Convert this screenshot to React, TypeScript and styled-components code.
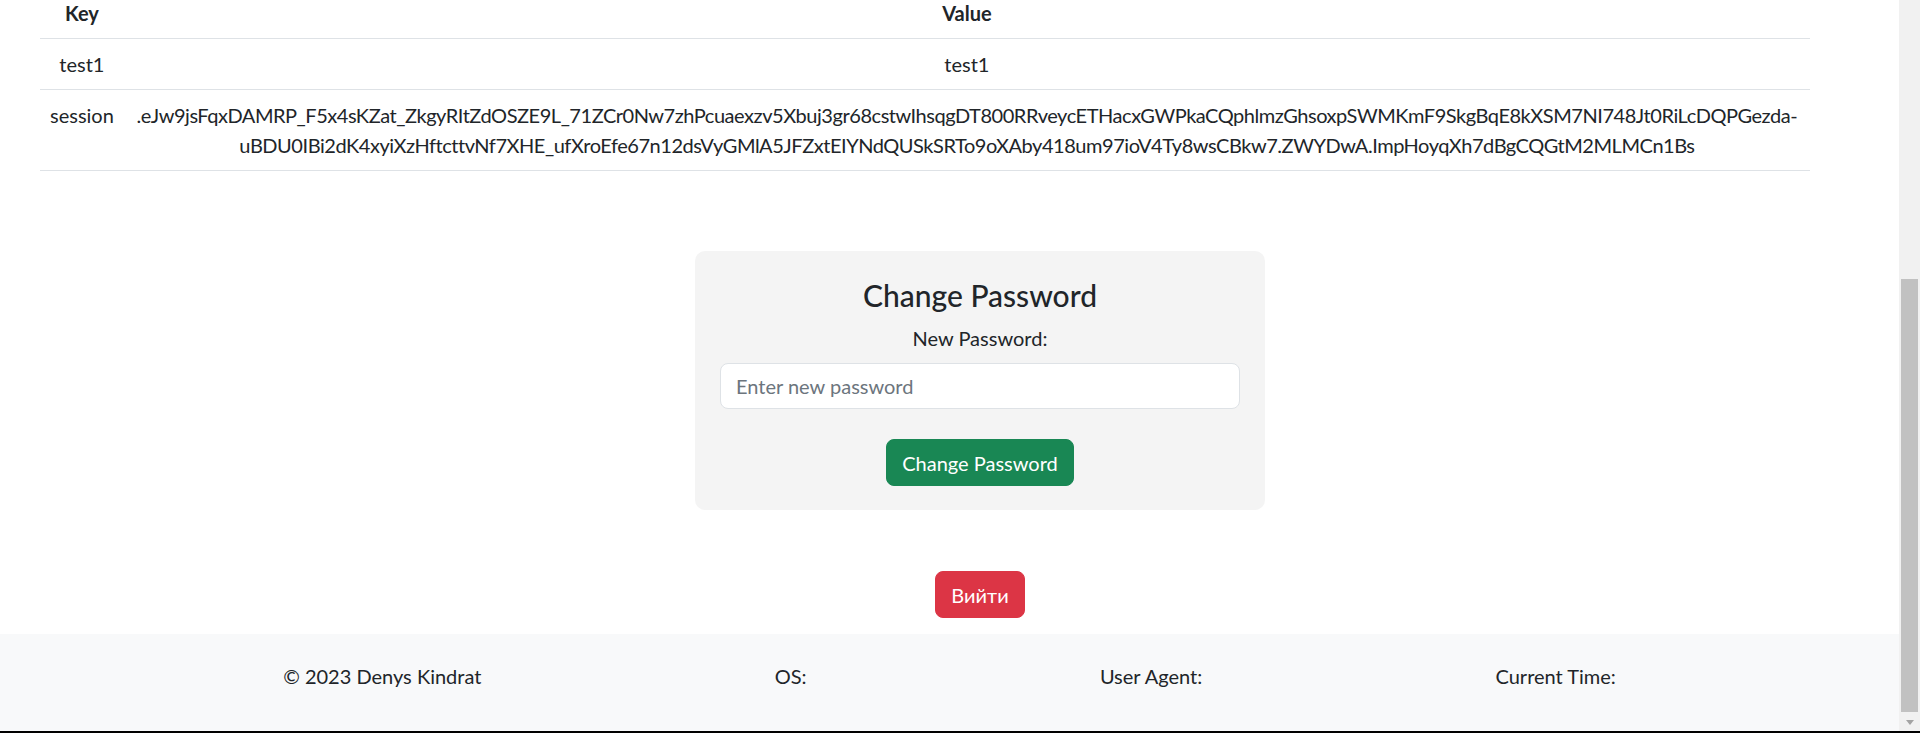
import React from "react";
import styled, { createGlobalStyle } from "styled-components";

const SESSION =
  ".eJw9jsFqxDAMRP_F5x4sKZat_ZkgyRItZdOSZE9L_71ZCr0Nw7zhPcuaexzv5Xbuj3gr68cstwIhsqgDT800RRveycETHacxGWPkaCQphlmzGhsoxpSWMKmF9SkgBqE8kXSM7NI748Jt0RiLcDQPGezda-uBDU0IBi2dK4xyiXzHftcttvNf7XHE_ufXroEfe67n12dsVyGMlA5JFZxtEIYNdQUSkSRTo9oXAby418um97ioV4Ty8wsCBkw7.ZWYDwA.ImpHoyqXh7dBgCQGtM2MLMCn1Bs";

const rows = [
  { key: "test1", value: "test1" },
  { key: "session", value: SESSION },
];

const footerItems = ["© 2023 Denys Kindrat", "OS:", "User Agent:", "Current Time:"];

const GlobalStyle = createGlobalStyle`
  html, body {
    margin: 0;
    padding: 0;
    overflow: hidden;
  }

  body {
    font-family: Lato, "Open Sans", sans-serif;
    font-size: 20px;
    line-height: 30px;
    color: #212529;
    background: #fff;
  }

  * {
    box-sizing: border-box;
  }
`;

export default function App() {
  return (
    <Screen>
      <GlobalStyle />
      <Viewport>
        <Main>
          <DataTable>
            <thead>
              <tr>
                <HeadCell>Key</HeadCell>
                <HeadCell>Value</HeadCell>
              </tr>
            </thead>
            <tbody>
              {rows.map(r => (
                <tr key={r.key}>
                  <Cell>{r.key}</Cell>
                  <Cell long={r.value.length > 40}>{r.value}</Cell>
                </tr>
              ))}
            </tbody>
          </DataTable>

          <CenterColumn>
            <Card>
              <Title>Change Password</Title>
              <Label htmlFor="new-password">New Password:</Label>
              <PasswordInput
                id="new-password"
                type="password"
                placeholder="Enter new password"
              />
              <ActionButton tone="green">Change Password</ActionButton>
            </Card>
            <LogoutRow>
              <ActionButton tone="red">Вийти</ActionButton>
            </LogoutRow>
          </CenterColumn>

          <Footer>
            <FooterInner>
              {footerItems.map(t => (
                <span key={t}>{t}</span>
              ))}
            </FooterInner>
          </Footer>
        </Main>

        <Scrollbar>
          <Thumb />
          <ArrowDown />
        </Scrollbar>
      </Viewport>
      <BottomEdge />
    </Screen>
  );
}

const Screen = styled.div`
  width: 1920px;
  height: 733px;

  display: flex;
  flex-direction: column;
`;

const Viewport = styled.div`
  height: 731px;

  display: flex;
  overflow: hidden;
`;

const Main = styled.div`
  flex: 1;

  display: flex;
  flex-direction: column;
  overflow: hidden;
`;

const DataTable = styled.table`
  width: 1770px;
  margin: -12px 0 0 40px;

  border-collapse: collapse;
  vertical-align: top;
`;

const HeadCell = styled.th`
  padding: 10px;

  font-weight: 700;
  text-align: center;
  border-bottom: 1px solid #dee2e6;
`;

const Cell = styled.td<{ long?: boolean }>`
  padding: 10px;

  text-align: center;
  vertical-align: top;
  letter-spacing: ${p => (p.long ? "-0.46px" : "normal")};
  border-bottom: 1px solid #dee2e6;
`;

const CenterColumn = styled.div`
  padding-left: 61px;
  margin-top: 80px;

  display: flex;
  flex-direction: column;
  align-items: center;
`;

const Card = styled.form`
  width: 570px;
  padding: 26px 25px 24px;

  display: flex;
  flex-direction: column;
  align-items: center;

  background: #f4f4f4;
  border-radius: 10px;
`;

const Title = styled.h3`
  margin: 0 0 10px;

  font-size: 30px;
  line-height: 36px;
  font-weight: 500;
`;

const Label = styled.label`
  display: block;
  margin-bottom: 10px;
`;

const PasswordInput = styled.input`
  width: 100%;
  height: 46px;
  padding: 7px 15px;
  margin-bottom: 30px;

  font: inherit;
  color: #212529;
  background: #fff;
  border: 1px solid #dee2e6;
  border-radius: 8px;
  outline: none;

  &::placeholder {
    color: #6c757d;
  }
`;

const ActionButton = styled.button.attrs({ type: "button" })<{ tone: "green" | "red" }>`
  padding: 7.5px 15px;

  font: inherit;
  color: #fff;
  background: ${p => (p.tone === "green" ? "#198754" : "#dc3545")};
  border: 1px solid ${p => (p.tone === "green" ? "#198754" : "#dc3545")};
  border-radius: 8px;
  cursor: pointer;
`;

const LogoutRow = styled.div`
  margin-top: 61px;
`;

const Footer = styled.footer`
  flex: 1;
  margin-top: 16px;
  padding-top: 27px;

  background: #f8f9fa;
`;

const FooterInner = styled.div`
  width: 1626px;
  margin: 0 auto;

  display: flex;
  justify-content: space-around;
`;

const Scrollbar = styled.div`
  width: 21px;
  flex: none;
  padding-top: 279px;

  display: flex;
  flex-direction: column;
  align-items: center;

  background: #f1f1f1;
`;

const Thumb = styled.div`
  width: 17px;
  height: 433px;

  background: #c1c1c1;
`;

const ArrowDown = styled.div`
  width: 0;
  height: 0;
  margin-top: 8px;

  border-left: 4.5px solid transparent;
  border-right: 4.5px solid transparent;
  border-top: 5px solid #a3a3a3;
`;

const BottomEdge = styled.div`
  height: 2px;

  background: #000;
`;
